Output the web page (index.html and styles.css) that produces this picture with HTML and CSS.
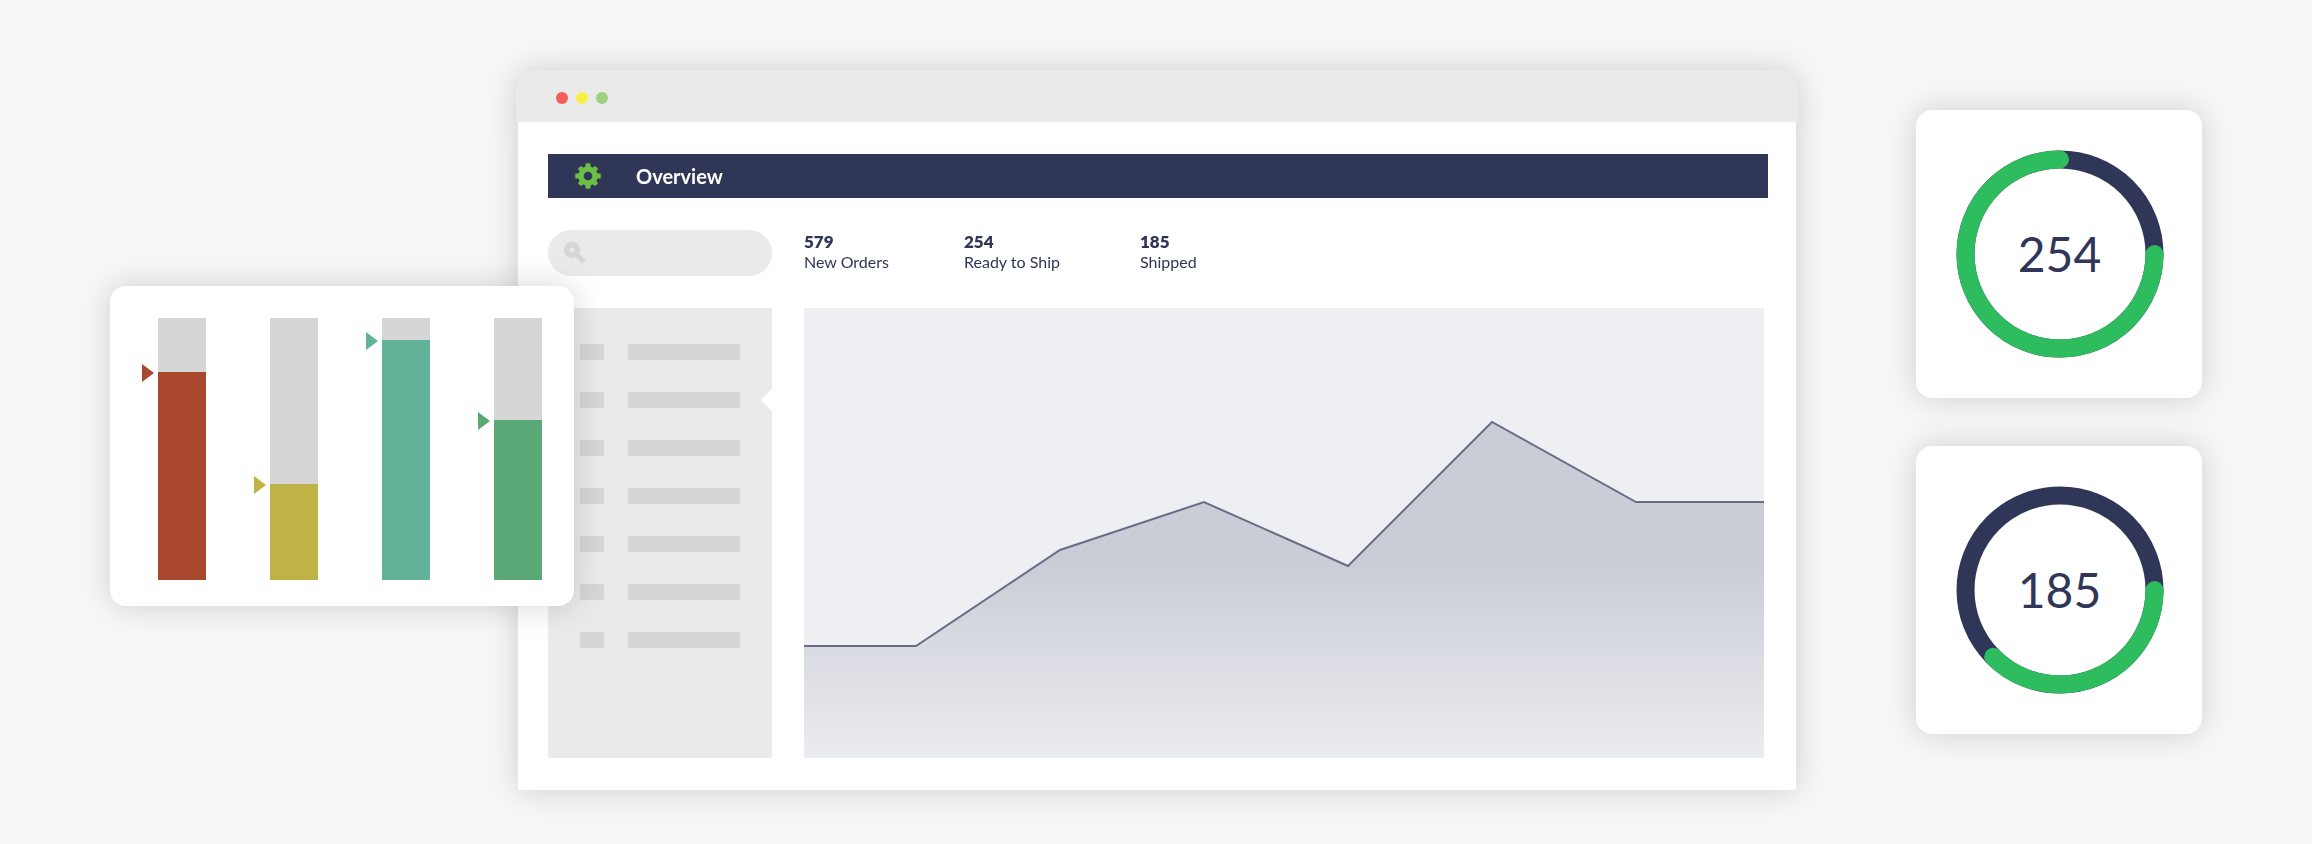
FILE: index.html
```html
<!DOCTYPE html>
<html lang="en">
<head>
<meta charset="utf-8">
<title>Overview</title>
<link rel="stylesheet" href="styles.css">
</head>
<body>
<main class="page">
  <section class="card levels" aria-label="Levels">
    <div class="track"><div class="level level-red" style="height:79.4%"></div></div>
    <div class="track"><div class="level level-gold" style="height:36.6%"></div></div>
    <div class="track"><div class="level level-teal" style="height:91.6%"></div></div>
    <div class="track"><div class="level level-green" style="height:61.1%"></div></div>
  </section>

  <section class="window">
    <div class="titlebar">
      <span class="dot dot-red"></span>
      <span class="dot dot-yellow"></span>
      <span class="dot dot-green"></span>
    </div>
    <div class="window-body">
      <header class="navbar">
        <svg class="gear" viewBox="-13 -13 26 26" aria-hidden="true">
          <g fill="#6cbe45">
            <path d="M-3 -8 L-2.2 -12.8 H2.2 L3 -8 Z M-3 8 L-2.2 12.8 H2.2 L3 8 Z M-8 -3 L-12.8 -2.2 V2.2 L-8 3 Z M8 -3 L12.8 -2.2 V2.2 L8 3 Z"/>
            <path transform="rotate(45)" d="M-3 -8 L-2 -12.2 H2 L3 -8 Z M-3 8 L-2 12.2 H2 L3 8 Z M-8 -3 L-12.2 -2 V2 L-8 3 Z M8 -3 L12.2 -2 V2 L8 3 Z"/>
          </g>
          <circle r="7" fill="none" stroke="#6cbe45" stroke-width="5.4"/>
        </svg>
        <h1 class="title">Overview</h1>
      </header>

      <div class="content">
        <label class="search">
          <svg class="search-icon" viewBox="0 0 24 24" aria-hidden="true">
            <circle cx="9" cy="9" r="5.3" fill="none" stroke="#d6d6d6" stroke-width="5.8"/>
            <path d="M13 13 L20.8 20.8" stroke="#d6d6d6" stroke-width="5.4"/>
          </svg>
          <input class="search-input" type="search" aria-label="Search">
        </label>

        <dl class="stats">
          <div class="stat"><dt class="stat-label">New Orders</dt><dd class="stat-value">579</dd></div>
          <div class="stat"><dt class="stat-label">Ready to Ship</dt><dd class="stat-value">254</dd></div>
          <div class="stat"><dt class="stat-label">Shipped</dt><dd class="stat-value">185</dd></div>
        </dl>

        <aside class="sidebar">
          <ul class="menu">
            <li class="row"><span class="key"></span><span class="text"></span></li>
            <li class="row row-active"><span class="key"></span><span class="text"></span></li>
            <li class="row"><span class="key"></span><span class="text"></span></li>
            <li class="row"><span class="key"></span><span class="text"></span></li>
            <li class="row"><span class="key"></span><span class="text"></span></li>
            <li class="row"><span class="key"></span><span class="text"></span></li>
            <li class="row"><span class="key"></span><span class="text"></span></li>
          </ul>
        </aside>

        <svg class="chart" viewBox="0 0 960 450" preserveAspectRatio="none" role="img" aria-label="Order trend">
          <defs>
            <linearGradient id="area" x1="0" y1="0" x2="0" y2="1">
              <stop offset="0.42" stop-color="#cacdd5"/>
              <stop offset="1" stop-color="#ebecf1"/>
            </linearGradient>
          </defs>
          <path fill="url(#area)" d="M0 338 H112 L256 242 L400 194 L544 258 L688 114 L832 194 H960 V450 H0 Z"/>
          <path class="chart-line" d="M0 338 H112 L256 242 L400 194 L544 258 L688 114 L832 194 H960"/>
        </svg>
      </div>
    </div>
  </section>

  <section class="gauges">
    <div class="card gauge">
      <svg class="ring" viewBox="-104 -104 208 208" aria-hidden="true">
        <circle class="ring-track" r="94.5"/>
        <path class="ring-value" d="M94.5 0 A94.5 94.5 0 1 1 0 -94.5"/>
      </svg>
      <span class="gauge-number">254</span>
    </div>
    <div class="card gauge">
      <svg class="ring" viewBox="-104 -104 208 208" aria-hidden="true">
        <circle class="ring-track" r="94.5"/>
        <path class="ring-value" d="M94.5 0 A94.5 94.5 0 0 1 -66.8 66.8"/>
      </svg>
      <span class="gauge-number">185</span>
    </div>
  </section>
</main>
</body>
</html>
```
FILE: styles.css
```css
* {
  box-sizing: border-box;
}

body {
  margin: 0;
  background: #f7f7f7;
  color: #303658;
  font-family: Lato, "Open Sans", sans-serif;
}

.page {
  display: flex;
  align-items: flex-start;
  padding: 70px 110px 54px;
}

.card {
  background: #fff;
  border-radius: 16px;
  box-shadow: 0 0 32px rgba(0, 0, 0, 0.17);
}

/* Level bars, overlapping the window's left edge */
.levels {
  display: flex;
  flex: none;
  justify-content: space-between;
  z-index: 1;
  width: 464px;
  margin: 216px -58px 0 0;
  padding: 32px 32px 26px 48px;
}

.track {
  display: flex;
  align-items: flex-end;
  width: 48px;
  height: 262px;
  background: #d6d6d6;
}

.level {
  position: relative;
  width: 100%;
  background: currentColor;
}

.level::before {
  content: "";
  position: absolute;
  top: -8px;
  left: -16px;
  width: 12px;
  height: 18px;
  background: currentColor;
  clip-path: polygon(0 0, 100% 50%, 0 100%);
}

.level-red { color: #a9482f; }
.level-gold { color: #c0b346; }
.level-teal { color: #62b199; }
.level-green { color: #5ba877; }

/* Browser window */
.window {
  flex: 1;
  min-width: 0;
  filter: drop-shadow(0 0 16px rgba(0, 0, 0, 0.17));
}

.titlebar {
  display: flex;
  align-items: center;
  gap: 8px;
  height: 52px;
  padding: 4px 40px 0;
  border-radius: 20px 20px 0 0;
  background: #eaeaea;
}

.dot {
  width: 12px;
  height: 12px;
  border-radius: 50%;
}

.dot-red { background: #f35d5c; }
.dot-yellow { background: #f8f043; }
.dot-green { background: #9dd27f; }

.window-body {
  margin: 0 2px;
  padding: 32px 28px 32px 30px;
  background: #fff;
}

.navbar {
  display: flex;
  align-items: center;
  gap: 35px;
  height: 44px;
  padding: 0 27px;
  background: #303658;
}

.gear {
  width: 26px;
  height: 26px;
}

.title {
  margin: 0;
  color: #fff;
  font-size: 20px;
  font-weight: 700;
  line-height: 24px;
}

.content {
  display: grid;
  grid-template-columns: 224px 1fr;
  gap: 32px;
  padding: 32px 4px 0 0;
}

.search {
  display: flex;
  align-items: center;
  gap: 8px;
  height: 46px;
  padding: 0 15px;
  border-radius: 23px;
  background: #eaeaea;
}

.search-icon {
  flex: none;
  width: 24px;
  height: 24px;
}

.search-input {
  flex: 1;
  min-width: 0;
  border: 0;
  outline: 0;
  background: transparent;
  color: inherit;
  font: inherit;
}

.stats {
  display: grid;
  grid-template-columns: 160px 176px 1fr;
  margin: 0;
  padding-top: 2px;
  font-size: 16px;
  line-height: 20px;
}

.stat {
  display: flex;
  flex-direction: column-reverse;
  justify-content: flex-end;
}

.stat-value {
  margin: 0;
  font-size: 17px;
  font-weight: 800;
}

.sidebar {
  padding: 36px 0 0 32px;
  background: #eaeaea;
}

.menu {
  display: grid;
  gap: 32px;
  margin: 0;
  padding: 0;
  list-style: none;
}

.row {
  display: flex;
  position: relative;
  gap: 24px;
  height: 16px;
}

.key {
  width: 24px;
  background: #d6d6d6;
}

.text {
  width: 112px;
  background: #d6d6d6;
}

.row-active::after {
  content: "";
  position: absolute;
  top: -3px;
  right: 0;
  width: 11px;
  height: 22px;
  background: #fff;
  clip-path: polygon(100% 0, 0 50%, 100% 100%);
}

.chart {
  display: block;
  width: 100%;
  height: 450px;
  background: #eeeff3;
}

.chart-line {
  fill: none;
  stroke: #676d87;
  stroke-width: 2;
  vector-effect: non-scaling-stroke;
}

/* Ring gauges */
.gauges {
  display: grid;
  flex: none;
  gap: 48px;
  width: 286px;
  margin: 40px 0 0 118px;
}

.gauge {
  display: grid;
  place-items: center;
  height: 288px;
  padding-left: 1px;
}

.ring,
.gauge-number {
  grid-area: 1 / 1;
}

.ring {
  width: 208px;
  height: 208px;
  fill: none;
  stroke-width: 18;
}

.ring-track {
  stroke: #303658;
}

.ring-value {
  stroke: #2dbd5f;
  stroke-linecap: round;
}

.gauge-number {
  font-size: 48px;
  line-height: 56px;
}
```
